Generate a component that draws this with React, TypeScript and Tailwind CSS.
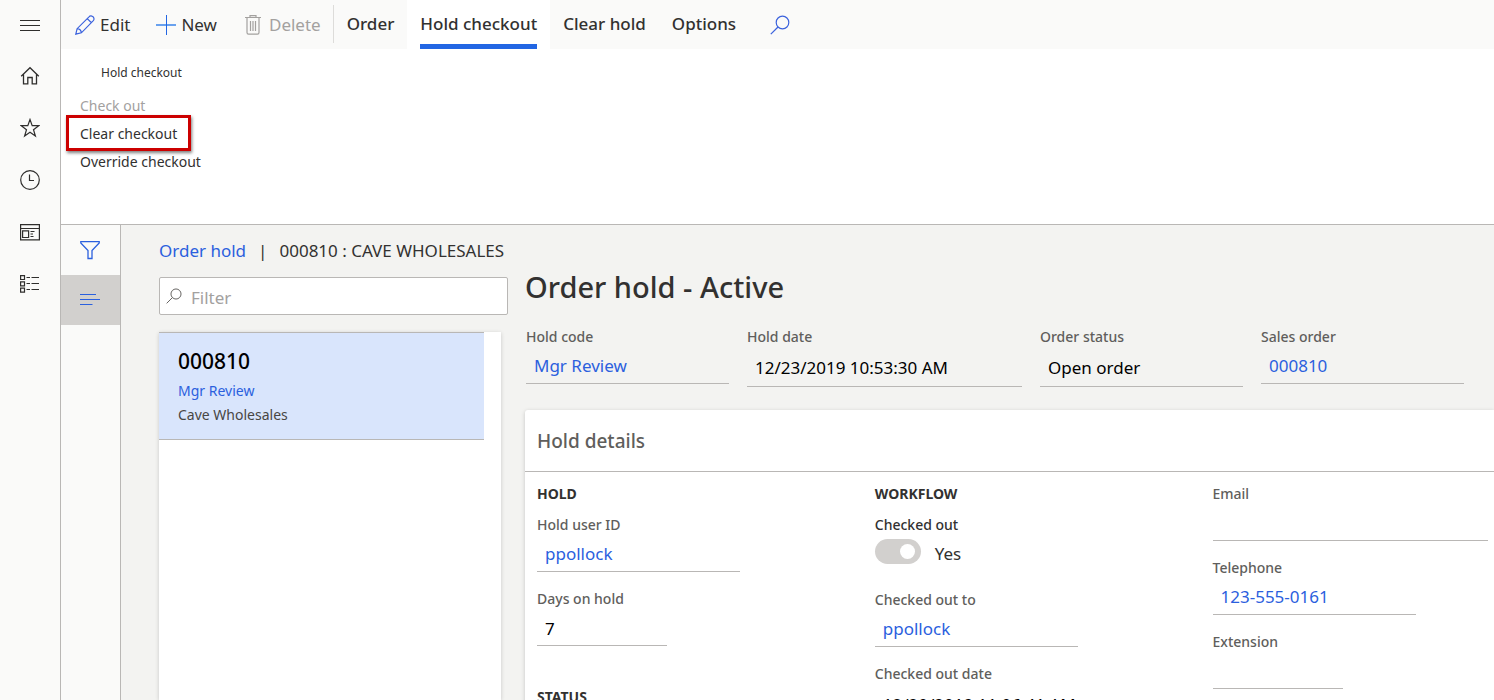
import { useId, useState, type ReactNode } from "react";
import clsx from "clsx";

type IconProps = { className?: string };

function MenuIcon() {
  return (
    <svg width="20" height="20" viewBox="0 0 20 20" stroke="currentColor" fill="none">
      <path d="M0 5.5h20M0 10.5h20M0 15.5h20" />
    </svg>
  );
}

function HomeIcon() {
  return (
    <svg width="20" height="20" viewBox="0 0 20 20" stroke="currentColor" strokeWidth="1.3" fill="none">
      <path d="M1.2 10.3L10 1.7l8.8 8.6M3.5 8.3v9.5h4.3v-6.3h4.4v6.3h4.3V8.3" />
    </svg>
  );
}

function StarIcon() {
  return (
    <svg width="20" height="20" viewBox="0 0 20 20" stroke="currentColor" strokeWidth="1.2" fill="none">
      <path d="M10 1.5l2.2 6.2h6.5l-5.2 4 1.9 6.4L10 14.3l-5.4 3.8 1.9-6.4-5.2-4h6.5z" />
    </svg>
  );
}

function ClockIcon() {
  return (
    <svg width="20" height="20" viewBox="0 0 20 20" stroke="currentColor" strokeWidth="1.2" fill="none">
      <circle cx="10" cy="10" r="9.3" />
      <path d="M9.5 4.5v6h4.5" />
    </svg>
  );
}

function WorkspaceIcon() {
  return (
    <svg width="20" height="20" viewBox="0 0 20 20" stroke="currentColor" strokeWidth="1.2" fill="none">
      <path d="M.6 2.6h18.8v15.300H.6zM.6 6.500h18.800M2.600 8.800h6v6.700h-6zM10.500 9.500h4M10.500 12h2.500M10.500 14.500h3" />
    </svg>
  );
}

function ModulesIcon() {
  return (
    <svg width="20" height="20" viewBox="0 0 20 20" stroke="currentColor" strokeWidth="1.2" fill="none">
      <path d="M.6 1.600h3.900v3.900H.6zM.6 7.900h3.900v3.900H.6zM.6 14.200h3.900v3.900H.6z" />
      <path d="M6.500 3.500h3.500M11.500 3.500h7.500M6.500 9.500h3.500M11.500 9.500h7.500M6.500 15.500h3.500M11.500 15.500h7.500" />
    </svg>
  );
}

function PencilIcon() {
  return (
    <svg width="20" height="20" viewBox="0 0 20 20" stroke="currentColor" strokeWidth="1.2" fill="none">
      <path d="M.8 19.2l1.300-5.500L14 1.800c1-1.200 2.600-1.200 3.700-.2 1.500 1.100 1.700 2.900.6 4.100L6.400 17.800zM2.100 13.700c2.200.2 4 1.800 4.300 4.100M12.200 3.600l4.300 4.200" />
    </svg>
  );
}

function PlusIcon() {
  return (
    <svg width="20" height="20" viewBox="0 0 20 20" fill="none">
      <path d="M0 10h20" stroke="#69a1ee" strokeWidth="2" />
      <path d="M10.5 0v20" stroke="#2266e3" />
    </svg>
  );
}

function TrashIcon() {
  return (
    <svg width="16" height="20" viewBox="0 0 16 20" stroke="currentColor" strokeWidth="1.2" fill="none">
      <path d="M0 2.5h16M5 2.5V.6h6v1.9M2 2.5v15c0 1 .5 1.7 1.500 1.700h9c1 0 1.500-.7 1.500-1.700v-15M5.500 6v10M8 6v10M10.500 6v10" />
    </svg>
  );
}

function SearchIcon({ className }: IconProps) {
  return (
    <svg className={className} viewBox="0 0 20 20" stroke="currentColor" strokeWidth="1.2" fill="none">
      <circle cx="12.5" cy="7.5" r="6.3" />
      <path d="M8 12L.8 19.2" />
    </svg>
  );
}

function FunnelIcon() {
  return (
    <svg width="20" height="20" viewBox="0 0 20 20" stroke="currentColor" strokeWidth="1.3" fill="none">
      <path d="M.8 1.7h18.400v1.200l-7.200 7.600v8H8v-8L.8 2.900z" />
    </svg>
  );
}

function LinesIcon() {
  return (
    <svg width="20" height="20" viewBox="0 0 20 20" stroke="currentColor" strokeWidth="1.2" fill="none">
      <path d="M0 4.5h16M0 9.5h20M0 14.5h12.5" />
    </svg>
  );
}

const NAV_ITEMS = [
  { label: "Home", icon: <HomeIcon /> },
  { label: "Favorites", icon: <StarIcon /> },
  { label: "Recent", icon: <ClockIcon /> },
  { label: "Workspaces", icon: <WorkspaceIcon /> },
  { label: "Modules", icon: <ModulesIcon /> },
];

const TABS = ["Order", "Hold checkout", "Clear hold", "Options"];

function NavRail() {
  return (
    <nav className="flex w-[61px] shrink-0 flex-col border-r border-[#b9b7b5] bg-[#fafaf9] text-[#2f2e2d]">
      <button aria-label="Expand navigation" className="flex h-[50px] items-center justify-center">
        <MenuIcon />
      </button>
      {NAV_ITEMS.map(({ label, icon }) => (
        <button key={label} aria-label={label} className="flex h-[52px] items-center justify-center">
          {icon}
        </button>
      ))}
    </nav>
  );
}

function ActionBar() {
  const [activeTab, setActiveTab] = useState("Hold checkout");

  return (
    <header className="flex h-[49px] shrink-0 bg-[#fafaf9] text-[17px] text-[#323130]">
      <button className="flex items-center gap-[5px] pr-3 pl-[14px]">
        <span className="text-[#3b62dd]">
          <PencilIcon />
        </span>
        Edit
      </button>
      <button className="flex items-center gap-[5px] px-[14px]">
        <PlusIcon />
        New
      </button>
      <button disabled className="flex items-center gap-2 pr-3 pl-[14px] text-[#a3a19f]">
        <TrashIcon />
        Delete
      </button>
      <span className="mt-[5px] h-[38px] w-px bg-[#dddcda]" />
      {TABS.map((tab) => (
        <button
          key={tab}
          onClick={() => setActiveTab(tab)}
          className={clsx("flex flex-col px-[13px] pt-3 font-medium", tab === activeTab && "bg-white")}
        >
          <span className="leading-6">{tab}</span>
          {tab === activeTab && <span className="mt-2 h-[5px] w-full bg-[#2266e3]" />}
        </button>
      ))}
      <button aria-label="Search" className="ml-[21px] text-[#3b62dd]">
        <SearchIcon className="size-5" />
      </button>
    </header>
  );
}

function Ribbon() {
  return (
    <section className="flex h-[176px] shrink-0 flex-col items-start border-b border-[#b9b7b5] bg-white pt-[14px] pl-[19px] text-[14px] text-[#323130]">
      <h2 className="mb-2 pl-[21px] text-[12px] leading-5">Hold checkout</h2>
      <button disabled className="h-7 text-[#a3a19f]">
        Check out
      </button>
      <button className="relative h-7">
        Clear checkout
        <span className="absolute -inset-x-[14px] -inset-y-1 border-3 border-[#cc0000] shadow-[1px_2px_3px_rgba(0,0,0,0.5)]" />
      </button>
      <button className="h-7">Override checkout</button>
    </section>
  );
}

type FieldProps = {
  label: string;
  value?: string;
  link?: boolean;
  tall?: boolean;
  width?: string;
};

function Field({ label, value = "", link, tall, width = "w-[203px]" }: FieldProps) {
  const id = useId();
  const box = clsx("border-b border-[#b9b7b5] text-[17px]", tall ? "h-10" : "h-[37px]");

  return (
    <div className={clsx("flex max-w-full flex-col", width)}>
      <label htmlFor={id} className="text-[14px] leading-5 font-medium text-[#605e5c]">
        {label}
      </label>
      {link ? (
        <div className={clsx(box, "flex items-center pt-0.5 pl-2 text-[#2b60de]")}>
          <a href="#" id={id}>
            {value}
          </a>
        </div>
      ) : (
        <input
          id={id}
          readOnly
          value={value}
          className={clsx(box, "w-full bg-transparent pt-0.5 pl-2 text-black outline-none")}
        />
      )}
    </div>
  );
}

function GroupTitle({ children }: { children: ReactNode }) {
  return <h3 className="mb-[11px] text-[14px] leading-5 font-bold text-[#323130]">{children}</h3>;
}

function OrderList() {
  return (
    <aside className="flex w-[349px] shrink-0 flex-col">
      <div className="flex h-[38px] items-center rounded-[2px] border border-[#b9b7b5] bg-white pl-[6px]">
        <SearchIcon className="size-4 text-[#605e5c]" />
        <input
          aria-label="Filter"
          placeholder="Filter"
          className="ml-[9px] min-w-0 flex-1 pt-1 text-[17px] outline-none placeholder:text-[#a3a19f]"
        />
      </div>
      <div className="mt-[17px] mr-[7px] flex-1 bg-white pr-[17px] shadow-[0_1px_4px_rgba(0,0,0,0.18)]">
        <div className="h-[108px] border-y border-[#b9b7b5] bg-[#d9e5fc] pt-3 pl-[19px] text-[14px]">
          <div className="text-[21px] leading-8 font-medium text-black">000810</div>
          <a href="#" className="block leading-7 text-[#2b60de]">
            Mgr Review
          </a>
          <div className="leading-5 text-[#484644]">Cave Wholesales</div>
        </div>
      </div>
    </aside>
  );
}

function HoldDetails() {
  const toggleId = useId();

  return (
    <section className="mt-[23px] flex-1 rounded-tl-[3px] bg-white shadow-[0_1px_4px_rgba(0,0,0,0.18)]">
      <h2 className="border-b border-[#b9b7b5] px-3 pt-4 pb-[15px] text-[19px] leading-[30px] font-medium text-[#605e5c]">
        Hold details
      </h2>
      <div className="grid grid-cols-[6fr_6fr_5fr] pt-3 pl-3">
        <div>
          <GroupTitle>HOLD</GroupTitle>
          <div className="flex flex-col gap-[17px]">
            <Field label="Hold user ID" value="ppollock" link />
            <Field label="Days on hold" value="7" width="w-[130px]" />
          </div>
          <div className="mt-[41px]">
            <GroupTitle>STATUS</GroupTitle>
          </div>
        </div>
        <div>
          <GroupTitle>WORKFLOW</GroupTitle>
          <label htmlFor={toggleId} className="block text-[14px] leading-5 font-medium text-[#323130]">
            Checked out
          </label>
          <div className="mt-1 mb-[26px] flex h-[25px] items-center gap-[14px]">
            <input
              id={toggleId}
              type="checkbox"
              role="switch"
              checked
              readOnly
              disabled
              className="flex h-[25px] w-[46px] appearance-none items-center rounded-full bg-[#d2d0ce] px-[6px] before:size-[15px] before:rounded-full before:bg-white checked:justify-end"
            />
            <span className="pt-1 text-[17px] text-[#323130]">Yes</span>
          </div>
          <div className="flex flex-col gap-[17px]">
            <Field label="Checked out to" value="ppollock" link />
            <Field label="Checked out date" value="12/20/2019 11:06:41 AM" tall width="w-[275px]" />
          </div>
        </div>
        <div className="flex flex-col gap-[17px]">
          <Field label="Email" width="w-[275px]" />
          <Field label="Telephone" value="123-555-0161" link />
          <Field label="Extension" width="w-[130px]" />
        </div>
      </div>
    </section>
  );
}

export default function App() {
  return (
    <div className="flex h-screen overflow-hidden font-['Noto_Sans','Open_Sans',sans-serif]">
      <NavRail />
      <div className="flex min-w-0 flex-1 flex-col">
        <ActionBar />
        <Ribbon />
        <div className="flex min-h-0 flex-1">
          <div className="flex w-[60px] shrink-0 flex-col border-r border-[#b9b7b5] bg-[#fafaf9] text-[#2b60de]">
            <button aria-label="Show filters" className="flex h-[50px] items-center pl-[19px]">
              <FunnelIcon />
            </button>
            <button aria-label="Show list" className="flex h-[50px] items-center bg-[#d2d0ce] pl-[19px]">
              <LinesIcon />
            </button>
          </div>
          <main className="flex min-w-0 flex-1 flex-col overflow-hidden bg-[#f3f3f1] pl-[38px]">
            <div className="flex h-[52px] shrink-0 items-center gap-3 text-[17px] text-[#323130]">
              <a href="#" className="text-[#2b60de]">
                Order hold
              </a>
              <span>|</span>
              <span>000810 : CAVE WHOLESALES</span>
            </div>
            <div className="flex min-h-0 flex-1">
              <OrderList />
              <div className="ml-[17px] flex min-w-0 flex-1 flex-col">
                <h1 className="mb-[30px] text-[29px] leading-5 font-medium text-[#323130]">Order hold - Active</h1>
                <div className="flex gap-[18px] pl-px">
                  <Field label="Hold code" value="Mgr Review" link />
                  <Field label="Hold date" value="12/23/2019 10:53:30 AM" tall width="w-[275px]" />
                  <Field label="Order status" value="Open order" tall />
                  <Field label="Sales order" value="000810" link />
                </div>
                <HoldDetails />
              </div>
            </div>
          </main>
        </div>
      </div>
    </div>
  );
}
